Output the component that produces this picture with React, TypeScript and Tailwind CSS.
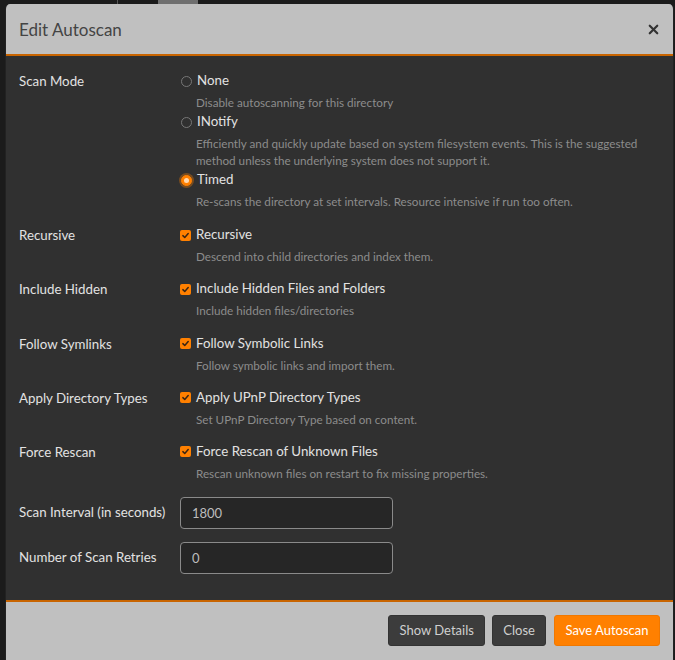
import { X } from "lucide-react";

type Opt = { label: string; desc: string; checked?: boolean };

const scanModes: Opt[] = [
  { label: "None", desc: "Disable autoscanning for this directory" },
  {
    label: "INotify",
    desc: "Efficiently and quickly update based on system filesystem events. This is the suggested method unless the underlying system does not support it.",
  },
  { label: "Timed", desc: "Re-scans the directory at set intervals. Resource intensive if run too often.", checked: true },
];

const checks = [
  { row: "Recursive", label: "Recursive", desc: "Descend into child directories and index them." },
  { row: "Include Hidden", label: "Include Hidden Files and Folders", desc: "Include hidden files/directories" },
  { row: "Follow Symlinks", label: "Follow Symbolic Links", desc: "Follow symbolic links and import them." },
  { row: "Apply Directory Types", label: "Apply UPnP Directory Types", desc: "Set UPnP Directory Type based on content." },
  { row: "Force Rescan", label: "Force Rescan of Unknown Files", desc: "Rescan unknown files on restart to fix missing properties." },
];

function Radio({ checked }: { checked?: boolean }) {
  if (checked)
    return (
      <span className="flex h-[11px] w-[11px] shrink-0 items-center justify-center rounded-full border border-[#ff8000] bg-[#ff8000] shadow-[0_0_0_2px_rgba(255,128,0,0.35)]">
        <span className="h-[5px] w-[5px] rounded-full bg-[#ffd9b0]" />
      </span>
    );
  return <span className="h-[11px] w-[11px] shrink-0 rounded-full border border-[#777]" />;
}

function Check() {
  return (
    <span className="flex h-[11px] w-[11px] shrink-0 items-center justify-center rounded-[2px] bg-[#ff8000]">
      <svg viewBox="0 0 12 12" className="h-[9px] w-[9px]" fill="none" stroke="#3a2412" strokeWidth="2" strokeLinecap="round" strokeLinejoin="round">
        <path d="M2.5 6.2 5 8.6 9.6 3.4" />
      </svg>
    </span>
  );
}

export default function App() {
  return (
    <div className="h-[660px] w-[675px] overflow-hidden bg-[#1b1b1b] font-['Lato','Noto_Sans',sans-serif]">
      <div className="flex h-[4px]">
        <div className="ml-[117px] w-px bg-[#555]" />
        <div className="ml-[40px] w-[40px] bg-[#6f6f6f]" />
      </div>

      <div className="ml-[5px] w-[669px] overflow-hidden rounded-t-[5px] border-x border-[#222]">
        <div className="flex h-[52px] items-center justify-between border-b-2 border-[#c86400] bg-[#c0c0c0] pl-[13px] pr-[12px]">
          <h1 className="pt-[1px] text-[17px] text-[#444]">Edit Autoscan</h1>
          <X className="h-[15px] w-[15px] text-[#333]" strokeWidth={3.5} />
        </div>

        <div className="bg-[#303030] px-[13px] pt-[15px] pb-[26px] text-[13.3px] text-[#e2e2e2]">
          <div className="flex">
            <div className="w-[161px] leading-[20px]">Scan Mode</div>
            <div className="flex-1">
              {scanModes.map((m) => (
                <div key={m.label} className="mb-[1px]">
                  <div className="flex h-[20px] items-center gap-[5px] pl-[1px]">
                    <Radio checked={m.checked} />
                    <span>{m.label}</span>
                  </div>
                  <p className="mt-[3px] pl-[16px] text-[11.7px] leading-[17px] text-[#8c8c8c]">{m.desc}</p>
                </div>
              ))}
            </div>
          </div>

          {checks.map((c) => (
            <div key={c.row} className="mt-[14.2px] flex">
              <div className="w-[161px] leading-[20px]">{c.row}</div>
              <div className="flex-1">
                <div className="flex h-[20px] items-center gap-[5px]">
                  <Check />
                  <span>{c.label}</span>
                </div>
                <p className="mt-[3px] pl-[16px] text-[11.7px] leading-[17px] text-[#8c8c8c]">{c.desc}</p>
              </div>
            </div>
          ))}

          <div className="mt-[15px] flex items-center">
            <label className="w-[161px]">Scan Interval (in seconds)</label>
            <input
              defaultValue="1800"
              className="h-[32px] w-[213px] rounded-[4px] border border-[#8a8a8a] bg-[#262626] px-[11px] text-[13px] text-[#bdbdbd] outline-none"
            />
          </div>
          <div className="mt-[13px] flex items-center">
            <label className="w-[161px]">Number of Scan Retries</label>
            <input
              defaultValue="0"
              className="h-[32px] w-[213px] rounded-[4px] border border-[#8a8a8a] bg-[#262626] px-[11px] text-[13px] text-[#bdbdbd] outline-none"
            />
          </div>
        </div>

        <div className="flex h-[70px] justify-end gap-[7px] border-t-2 border-[#c86400] bg-[#c0c0c0] px-[13px] pt-[13px] text-[13px]">
          <button className="h-[31px] rounded-[3px] border border-[#333] bg-[#3c3c3c] px-[10.5px] text-[#cfcfcf]">Show Details</button>
          <button className="h-[31px] rounded-[3px] border border-[#333] bg-[#3c3c3c] px-[10px] text-[#cfcfcf]">Close</button>
          <button className="ml-[1px] h-[31px] rounded-[3px] border border-[#f07800] bg-[#ff8000] px-[10.5px] text-white">Save Autoscan</button>
        </div>
      </div>
    </div>
  );
}
